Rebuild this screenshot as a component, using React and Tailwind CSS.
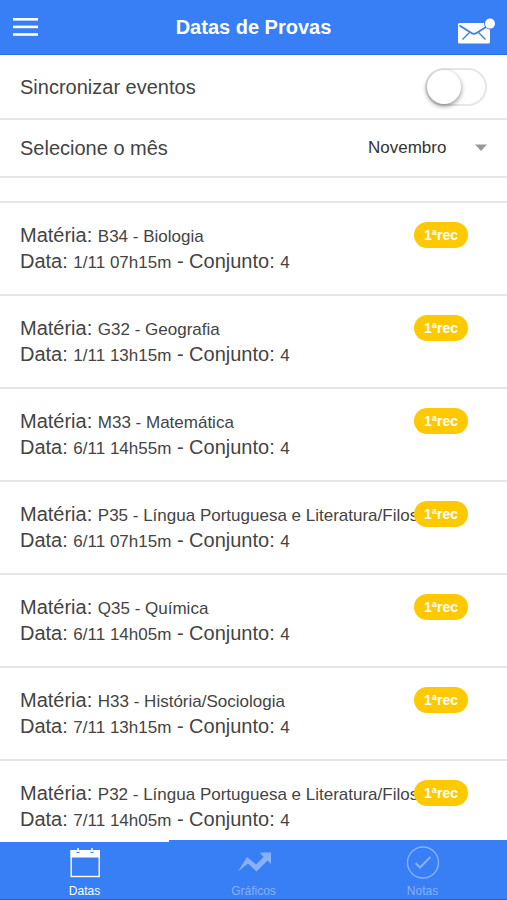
import React, { useState } from "react";

const meses = [
  "Janeiro", "Fevereiro", "Março", "Abril", "Maio", "Junho",
  "Julho", "Agosto", "Setembro", "Outubro", "Novembro", "Dezembro",
];

const provas = [
  { id: 1, materia: "B34 - Biologia", data: "1/11 07h15m", conjunto: 4, tipo: "1ªrec" },
  { id: 2, materia: "G32 - Geografia", data: "1/11 13h15m", conjunto: 4, tipo: "1ªrec" },
  { id: 3, materia: "M33 - Matemática", data: "6/11 14h55m", conjunto: 4, tipo: "1ªrec" },
  { id: 4, materia: "P35 - Língua Portuguesa e Literatura/Filosofia", data: "6/11 07h15m", conjunto: 4, tipo: "1ªrec" },
  { id: 5, materia: "Q35 - Química", data: "6/11 14h05m", conjunto: 4, tipo: "1ªrec" },
  { id: 6, materia: "H33 - História/Sociologia", data: "7/11 13h15m", conjunto: 4, tipo: "1ªrec" },
  { id: 7, materia: "P32 - Língua Portuguesa e Literatura/Filosofia", data: "7/11 14h05m", conjunto: 4, tipo: "1ªrec" },
];

function MenuIcon() {
  return (
    <svg width="26" height="18" viewBox="0 0 26 18" fill="currentColor" aria-hidden="true">
      <rect x="1" width="25" height="2.6" />
      <rect x="1" y="7.6" width="25" height="2.6" />
      <rect x="1" y="15.2" width="25" height="2.6" />
    </svg>
  );
}

function MailIcon() {
  return (
    <svg width="38" height="26" viewBox="0 0 38 26" aria-hidden="true">
      <rect x="1" y="5" width="32" height="20.5" rx="1.5" fill="white" />
      <g fill="none" stroke="#387ef5">
        <path d="M2.5 7.500 L14.500 15 Q17 16.600 19.500 15 L31.500 7.500" strokeWidth="1.8" />
        <path d="M5.5 21.500 L12.500 14.500 M28.500 21.500 L21.500 14.500" strokeWidth="1.4" />
      </g>
      <circle cx="33" cy="5.600" r="6" fill="#387ef5" />
      <circle cx="33" cy="5.600" r="5" fill="white" />
    </svg>
  );
}

function CalendarIcon() {
  return (
    <svg width="32" height="33" viewBox="0 0 32 33" aria-hidden="true">
      <path d="M1.500 4h6v3h3V4h11v3h3V4h6.500v7.500H1.500z" fill="currentColor" />
      <path d="M9 2v4M23 2v4" stroke="currentColor" strokeWidth="1.500" />
      <rect x="2.200" y="5" width="28" height="25.500" fill="none" stroke="currentColor" strokeWidth="1.400" />
    </svg>
  );
}

function ChartIcon() {
  return (
    <svg width="36" height="33" viewBox="0 0 36 33" aria-hidden="true">
      <path
        d="M2 25.500 L11 11 L20 18.500 L27.500 11 L24 6.500 L35 6.500 L35 18 L31.500 14.500 L20.500 25.500 L12 17.500 Z"
        fill="currentColor"
      />
    </svg>
  );
}

function CheckIcon() {
  return (
    <svg width="34" height="33" viewBox="0 0 34 33" fill="none" stroke="currentColor" aria-hidden="true">
      <circle cx="17" cy="16.500" r="15.500" strokeWidth="1.400" />
      <path d="M9.500 17 L14 21.500 L24.500 11" strokeWidth="2" />
    </svg>
  );
}

const abas = [
  { id: "datas", nome: "Datas", Icone: CalendarIcon },
  { id: "graficos", nome: "Gráficos", Icone: ChartIcon },
  { id: "notas", nome: "Notas", Icone: CheckIcon },
];

function Prova({ prova }) {
  return (
    <li className="relative border-t-2 border-[#e6e6e6] pt-[19px] pr-[87px] pb-5 pl-5 leading-[26px]">
      <p className="h-[26px] overflow-hidden whitespace-nowrap">
        Matéria: <span className="text-[17px] leading-none">{prova.materia}</span>
      </p>
      <p className="h-[26px] whitespace-nowrap">
        Data: <span className="text-[17px] leading-none">{prova.data}</span> - Conjunto:{" "}
        <span className="text-[17px] leading-none">{prova.conjunto}</span>
      </p>
      <span className="absolute top-[19px] right-[39px] rounded-full bg-[#ffc900] px-[10px] text-[14px] font-bold text-white">
        {prova.tipo}
      </span>
    </li>
  );
}

function App() {
  const [sincronizar, setSincronizar] = useState(false);
  const [mes, setMes] = useState("Novembro");
  const [aba, setAba] = useState("datas");

  return (
    <div className="flex h-screen flex-col overflow-hidden bg-white font-['Liberation_Sans',Arial,sans-serif] text-[20px] text-[#444]">
      <header className="grid h-[55px] shrink-0 grid-cols-[1fr_auto_1fr] items-center border-b border-[#2a6de8] bg-[#387ef5] px-3 text-white">
        <button type="button" aria-label="Menu" className="justify-self-start">
          <MenuIcon />
        </button>
        <h1 className="text-[20px] font-bold">Datas de Provas</h1>
        <button type="button" aria-label="Mensagens" className="justify-self-end pt-2">
          <MailIcon />
        </button>
      </header>

      <main className="min-h-0 flex-1 overflow-hidden">
        <label className="flex h-[63px] items-center justify-between px-5">
          Sincronizar eventos
          <span className="relative">
            <input
              type="checkbox"
              checked={sincronizar}
              onChange={(e) => setSincronizar(e.target.checked)}
              className="peer block h-[38px] w-[62px] appearance-none rounded-full border-2 border-[#e6e6e6] bg-white checked:border-[#387ef5] checked:bg-[#387ef5]"
            />
            <span className="pointer-events-none absolute top-[2px] left-[2px] size-[34px] rounded-full bg-white shadow-[0_2px_5px_rgba(0,0,0,0.45)] peer-checked:left-[26px]" />
          </span>
        </label>

        <div className="flex h-[60px] items-center justify-between border-y-2 border-[#e6e6e6] pl-5">
          <label htmlFor="mes">Selecione o mês</label>
          <div className="relative">
            <select
              id="mes"
              value={mes}
              onChange={(e) => setMes(e.target.value)}
              className="h-14 w-[139px] appearance-none bg-transparent text-[17px] text-[#333]"
            >
              {meses.map((m) => (
                <option key={m}>{m}</option>
              ))}
            </select>
            <svg width="12" height="7" viewBox="0 0 12 7" className="pointer-events-none absolute top-6 right-5" aria-hidden="true">
              <path d="M0 0.500h12L6 7z" fill="#999" />
            </svg>
          </div>
        </div>

        <ul className="mt-[23px]">
          {provas.map((prova) => (
            <Prova key={prova.id} prova={prova} />
          ))}
        </ul>
      </main>

      <nav className="grid h-[60px] shrink-0 grid-cols-3 border-b border-[#1c5fe0] bg-[#387ef5] text-white">
        {abas.map(({ id, nome, Icone }) => (
          <button
            key={id}
            type="button"
            onClick={() => setAba(id)}
            className={
              "flex flex-col items-center justify-between border-t-2 pt-1 text-[12px] leading-[16px] " +
              (aba === id ? "border-white" : "border-[#387ef5] text-white/40")
            }
          >
            <Icone />
            {nome}
          </button>
        ))}
      </nav>
    </div>
  );
}

export default App;
